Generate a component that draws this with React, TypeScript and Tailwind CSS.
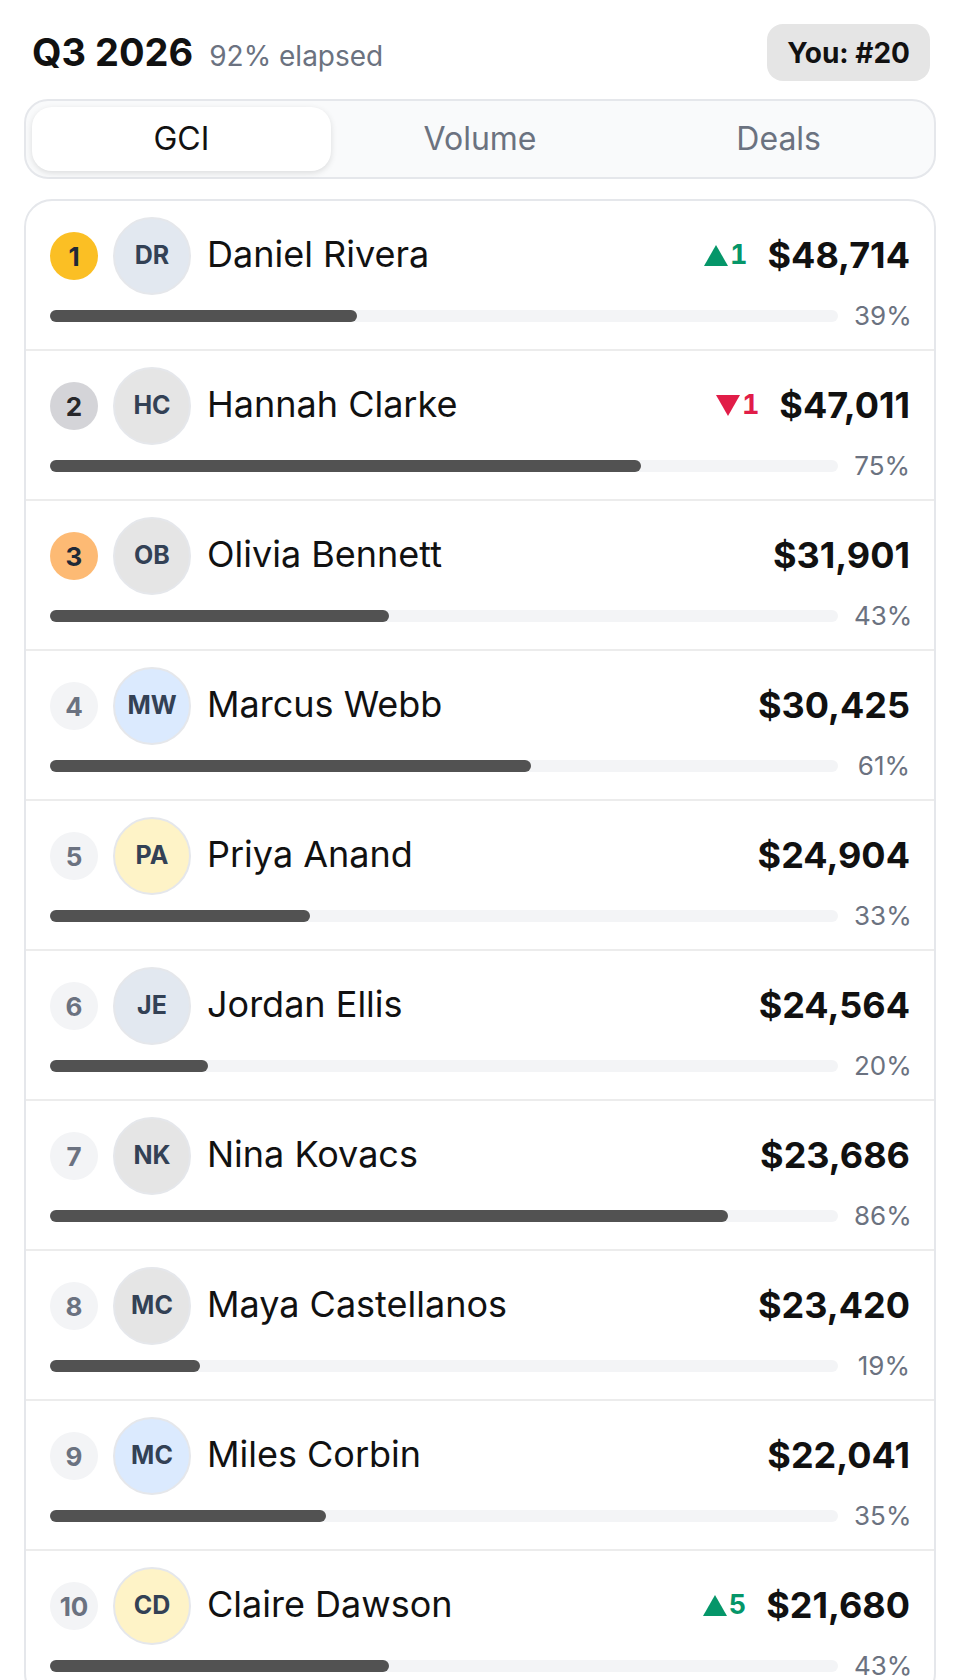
import React from "react";

type Agent = {
  rank: number;
  initials: string;
  name: string;
  amount: string;
  pct: number;
  delta?: number;
  avatar: string;
};

const agents: Agent[] = [
  { rank: 1, initials: "DR", name: "Daniel Rivera", amount: "$48,714", pct: 39, delta: 1, avatar: "bg-[#e2e8f0]" },
  { rank: 2, initials: "HC", name: "Hannah Clarke", amount: "$47,011", pct: 75, delta: -1, avatar: "bg-[#e5e5e5]" },
  { rank: 3, initials: "OB", name: "Olivia Bennett", amount: "$31,901", pct: 43, avatar: "bg-[#e5e5e5]" },
  { rank: 4, initials: "MW", name: "Marcus Webb", amount: "$30,425", pct: 61, avatar: "bg-[#dbeafe]" },
  { rank: 5, initials: "PA", name: "Priya Anand", amount: "$24,904", pct: 33, avatar: "bg-[#fef3c7]" },
  { rank: 6, initials: "JE", name: "Jordan Ellis", amount: "$24,564", pct: 20, avatar: "bg-[#e2e8f0]" },
  { rank: 7, initials: "NK", name: "Nina Kovacs", amount: "$23,686", pct: 86, avatar: "bg-[#e5e5e5]" },
  { rank: 8, initials: "MC", name: "Maya Castellanos", amount: "$23,420", pct: 19, avatar: "bg-[#e5e5e5]" },
  { rank: 9, initials: "MC", name: "Miles Corbin", amount: "$22,041", pct: 35, avatar: "bg-[#dbeafe]" },
  { rank: 10, initials: "CD", name: "Claire Dawson", amount: "$21,680", pct: 43, delta: 5, avatar: "bg-[#fef3c7]" },
];

function rankStyle(rank: number) {
  if (rank === 1) return "bg-[#fbbf24] text-[#1f2937]";
  if (rank === 2) return "bg-[#d4d4d8] text-[#27272a]";
  if (rank === 3) return "bg-[#fdba74] text-[#1f2937]";
  return "bg-[#f3f4f6] text-[#6b7280]";
}

function Delta({ value }: { value: number }) {
  const up = value > 0;
  return (
    <span
      className={`flex items-center gap-[2px] text-[27px] font-bold tabular-nums ${
        up ? "text-[#059669]" : "text-[#e11d48]"
      }`}
    >
      <svg width="24" height="21" viewBox="0 0 24 21" aria-hidden>
        {up ? (
          <path d="M12 0 L24 21 L0 21 Z" fill="currentColor" />
        ) : (
          <path d="M0 0 L24 0 L12 21 Z" fill="currentColor" />
        )}
      </svg>
      {Math.abs(value)}
    </span>
  );
}

function Row({ agent, first }: { agent: Agent; first: boolean }) {
  return (
    <li className={`px-[24px] py-[16px] ${first ? "" : "border-t-2 border-[#ececec]"}`}>
      <div className="flex items-center">
        <span
          className={`flex h-[48px] w-[48px] shrink-0 items-center justify-center rounded-full text-[26px] font-bold ${rankStyle(
            agent.rank,
          )}`}
        >
          {agent.rank}
        </span>
        <span
          className={`ml-[15px] flex h-[78px] w-[78px] shrink-0 items-center justify-center rounded-full border-2 border-[#e5e7eb] text-[25px] font-bold text-[#334155] ${agent.avatar}`}
        >
          {agent.initials}
        </span>
        <span className="ml-[16px] -mt-[4px] flex-1 truncate text-[36px] text-[#111111]">{agent.name}</span>
        <div className="-mt-[2px] flex items-center gap-[20px]">
          {agent.delta ? <Delta value={agent.delta} /> : null}
          <span className="text-[36px] font-bold text-[#111111]">{agent.amount}</span>
        </div>
      </div>
      <div className="mt-[4px] flex items-center gap-[16px]">
        <div className="h-[12px] flex-1 rounded-full bg-[#f3f4f6]">
          <div className="h-full rounded-full bg-[#525252]" style={{ width: `${agent.pct}%` }} />
        </div>
        <span className="w-[56px] text-right text-[26px] leading-[34px] text-[#6b7280]">{agent.pct}%</span>
      </div>
    </li>
  );
}

export default function App() {
  const tabs = ["GCI", "Volume", "Deals"];
  return (
    <div
      className="h-[1680px] w-[960px] overflow-hidden bg-white px-[24px] pt-[24px]"
      style={{ fontFamily: "Inter, 'Noto Sans', sans-serif" }}
    >
      <header className="flex items-center justify-between pr-[6px]">
        <div className="flex items-baseline gap-[16px] pl-[8px]">
          <h1 className="text-[38px] font-bold text-[#111111]">Q3 2026</h1>
          <span className="text-[28px] text-[#6b7280]">92% elapsed</span>
        </div>
        <span className="flex h-[57px] items-center rounded-[16px] bg-[#e5e5e5] px-[20px] text-[28px] font-bold text-[#111111]">
          You: #20
        </span>
      </header>

      <div className="mt-[18px] grid h-[80px] grid-cols-3 rounded-[24px] border-2 border-[#e5e7eb] bg-[#f9fafb] p-[6px]">
        {tabs.map((t, i) => (
          <button
            key={t}
            className={`flex items-center justify-center rounded-[20px] text-[32px] ${
              i === 0
                ? "bg-white text-[#111111] shadow-[0_2px_6px_rgba(0,0,0,0.12)]"
                : "text-[#6b7280]"
            }`}
          >
            {t}
          </button>
        ))}
      </div>

      <ul className="mt-[20px] overflow-hidden rounded-[28px] border-2 border-[#e5e7eb]">
        {agents.map((a, i) => (
          <Row key={a.rank} agent={a} first={i === 0} />
        ))}
      </ul>
    </div>
  );
}
